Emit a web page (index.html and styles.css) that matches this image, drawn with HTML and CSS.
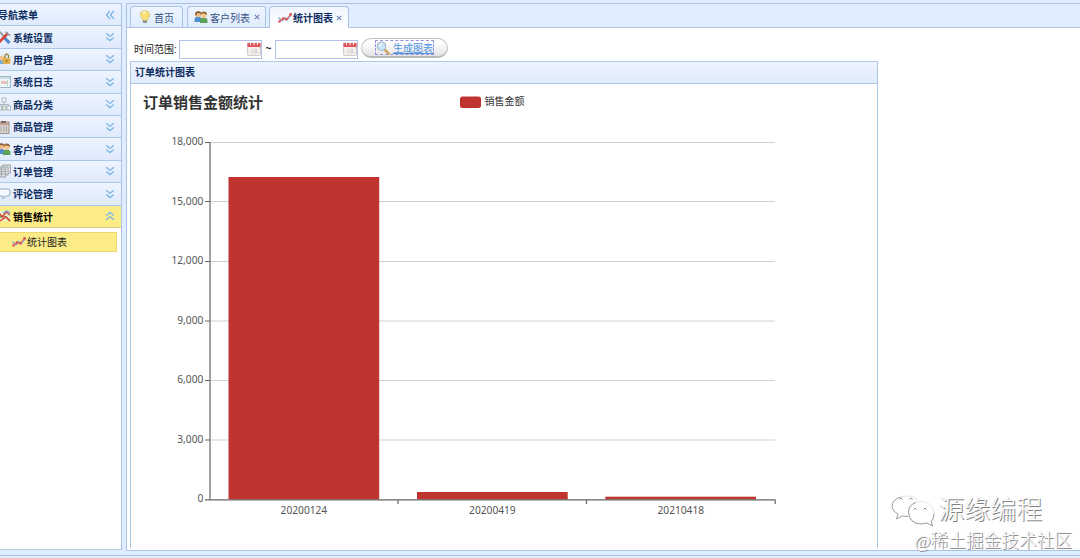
FILE: index.html
```html
<!DOCTYPE html>
<html lang="zh-CN">

<head>
    <meta charset="UTF-8">
    <meta name="viewport" content="width=device-width, initial-scale=1.0">
    <title>统计图表</title>
    <link rel="stylesheet" href="styles.css">
</head>

<body>
    <svg class="sprite" width="0" height="0">
        <symbol id="down" viewBox="0 0 10 10">
            <path d="M1.2 1.2L5 4.4 8.8 1.2M1.2 5.4L5 8.6 8.8 5.4" fill="none" stroke="#7db6e8" stroke-width="1.3"/>
        </symbol>
        <symbol id="trend" viewBox="0 0 14 14">
            <path d="M0.5 6.500L4 10 7 6.500 9 9 13.500 3.500" fill="none" stroke="#8ba6cc" stroke-width="1.3"/>
            <path d="M1 10.500L5 7.500 8 8.500 13 3" fill="none" stroke="#e46a63" stroke-width="1.1"/>
            <g fill="#e0534c"><circle cx="1.500" cy="10.500" r="1.200"/><circle cx="5" cy="7.500" r="1.300"/><circle cx="8.300" cy="8.300" r="1.300"/><circle cx="12.500" cy="3.300" r="1.400"/></g>
        </symbol>
        <symbol id="people" viewBox="0 0 14 14">
            <path d="M0.500 12V9Q1 6.500 4 6.500T7.500 9V12Z" fill="#4c8fd4"/>
            <circle cx="4.200" cy="4.500" r="2.800" fill="#efbd87"/>
            <path d="M1 4.500Q1 1.500 4.200 1.200T7.200 4Q5 2.500 3 3.500L2 6Z" fill="#8a5a2a"/>
            <path d="M6 13V10Q6.500 7.500 9.700 7.500T13.500 10V13Z" fill="#5ba357"/>
            <circle cx="9.700" cy="5" r="3" fill="#f5c792"/>
            <path d="M6.500 5Q6.500 1.500 9.800 1.500T13 5Q11 3 8.300 3.600Z" fill="#916336"/>
        </symbol>
        <symbol id="calendar" viewBox="0 0 14 14">
            <rect x="0.500" y="1" width="13" height="12.500" rx="1" fill="#f3eeee" stroke="#d5caca"/>
            <path d="M0.500 1H13.500V5H0.500Z" fill="#e65558"/>
            <path d="M3.500 0V3M7 0V3M10.500 0V3" stroke="#fff" stroke-width="1"/>
            <path d="M5.500 7.500V11M8 7.500H9.500V11H8Z" fill="none" stroke="#d0c5c6" stroke-width="0.800"/>
        </symbol>
    </svg>

    <div class="layout">
        <div class="sidebar">
            <div class="nav-header nav-title"><span>导航菜单</span>
                <svg class="arrow" viewBox="0 0 10 10"><path d="M4.800 1L1.500 5 4.800 9M8.800 1L5.500 5 8.800 9" fill="none" stroke="#7db6e8" stroke-width="1.3"/></svg>
            </div>
            <div class="nav-header">
                <svg class="icon" viewBox="0 0 14 14"><path d="M3 2L12 12" stroke="#9aa4ad" stroke-width="2"/><path d="M7.500 8L12.500 13" stroke="#4a86d0" stroke-width="3"/><path d="M11 3L2 12.500" stroke="#d94236" stroke-width="2.600"/><path d="M9 1.500L10.500 4.500 13.500 5" fill="none" stroke="#8c9299" stroke-width="1.500"/></svg>
                <span>系统设置</span><svg class="arrow"><use href="#down"/></svg>
            </div>
            <div class="nav-header">
                <svg class="icon" viewBox="0 0 14 14"><path d="M1 12V9L5 7.500 9 9V12Z" fill="#75aade"/><circle cx="5" cy="6" r="2.500" fill="#f0c087"/><path d="M8 6V3.500Q9.500 0.500 11.500 3.500V6" fill="none" stroke="#9a8446" stroke-width="1.400"/><rect x="5.500" y="6" width="8" height="6" rx="2" fill="#ddb04a"/><circle cx="9.500" cy="9" r="1" fill="#8d692c"/></svg>
                <span>用户管理</span><svg class="arrow"><use href="#down"/></svg>
            </div>
            <div class="nav-header">
                <svg class="icon" viewBox="0 0 14 14"><rect x="0.500" y="1.500" width="13" height="11" fill="#eef5fa" stroke="#9eb6c4"/><path d="M1 3H13" stroke="#a8c9d6"/><path d="M5 6V9M7 6V9M9 6V9" stroke="#e58e83"/><path d="M10.500 5V11" stroke="#b5dbc6"/></svg>
                <span>系统日志</span><svg class="arrow"><use href="#down"/></svg>
            </div>
            <div class="nav-header">
                <svg class="icon" viewBox="0 0 14 14"><g fill="#f3f6f8" stroke="#a1aab4" stroke-width="0.800"><path d="M7 4V8M3 9V7.500H11.500V9" fill="none"/><rect x="5" y="1" width="4" height="4"/><rect x="1" y="9" width="3.500" height="4"/><rect x="5.500" y="9" width="3.500" height="4" fill="#d9edcf"/><rect x="10" y="9" width="3.500" height="4"/></g></svg>
                <span>商品分类</span><svg class="arrow"><use href="#down"/></svg>
            </div>
            <div class="nav-header">
                <svg class="icon" viewBox="0 0 14 14"><rect x="1" y="2" width="11" height="11.500" fill="#d9d4d2" stroke="#9d8f89"/><path d="M4 1H9V3H4Z" fill="#806b60"/><path d="M1 4H12" stroke="#b4685b"/><path d="M4 6V12M7 6V12M9.500 6V12" stroke="#a8a3a2"/></svg>
                <span>商品管理</span><svg class="arrow"><use href="#down"/></svg>
            </div>
            <div class="nav-header">
                <svg class="icon"><use href="#people"/></svg>
                <span>客户管理</span><svg class="arrow"><use href="#down"/></svg>
            </div>
            <div class="nav-header">
                <svg class="icon" viewBox="0 0 14 14"><g fill="#dddfe2" stroke="#95989e" stroke-width="0.800"><rect x="5.500" y="1" width="8" height="8"/><rect x="3" y="3" width="8" height="8"/><rect x="0.500" y="5" width="8" height="8"/><path d="M0.500 7.500H8.500M0.500 10H8.500M4.500 5V13"/></g></svg>
                <span>订单管理</span><svg class="arrow"><use href="#down"/></svg>
            </div>
            <div class="nav-header">
                <svg class="icon" viewBox="0 0 14 14"><path d="M3 2H11Q13 2 13 4V7Q13 9 11 9H8.500L6 12V9H3Q1 9 1 7V4Q1 2 3 2Z" fill="#f7fbff" stroke="#90a7bf"/></svg>
                <span>评论管理</span><svg class="arrow"><use href="#down"/></svg>
            </div>
            <div class="nav-header selected">
                <svg class="icon" viewBox="0 0 14 14"><rect x="1" y="2" width="12" height="10" fill="#e9efcf"/><path d="M0.500 10L5 7 9 8 13 12" fill="none" stroke="#62a34a" stroke-width="1.600"/><path d="M1 3L5.500 8 9 3 13 6M3 12L9 8 13 12" fill="none" stroke="#dd463d" stroke-width="1.500"/><path d="M6 4L10 2 13 4" fill="none" stroke="#6b9bd5" stroke-width="1.300"/></svg>
                <span>销售统计</span><svg class="arrow up"><use href="#down"/></svg>
            </div>
            <div class="nav-item"><svg class="icon"><use href="#trend"/></svg><span>统计图表</span></div>
        </div>

        <div class="main">
            <div class="tabs">
                <div class="tab tab-home">
                    <svg class="icon" viewBox="0 0 14 14"><path d="M4.500 9Q2.500 7 2.500 4.800 2.500 1 7 0.700 11.500 1 11.500 4.800 11.500 7 9.500 9V10.500H4.500Z" fill="#f9df72" stroke="#d8bd62" stroke-width="0.800"/><path d="M5 3.500Q6 2 7.500 2" fill="none" stroke="#fff" stroke-width="1.300"/><path d="M5 10.500H9V13H5Z" fill="#8e949d"/></svg>
                    <span>首页</span>
                </div>
                <div class="tab tab-customer"><svg class="icon"><use href="#people"/></svg><span>客户列表</span><svg class="close" viewBox="0 0 6 6"><path d="M0.800 0.800L5.200 5.200M5.200 0.800L0.800 5.200"/></svg></div>
                <div class="tab tab-chart active"><svg class="icon"><use href="#trend"/></svg><span>统计图表</span><svg class="close" viewBox="0 0 6 6"><path d="M0.800 0.800L5.200 5.200M5.200 0.800L0.800 5.200"/></svg></div>
            </div>

            <div class="content">
                <div class="toolbar">
                    <label>时间范围:</label>
                    <div class="datebox"><svg><use href="#calendar"/></svg></div>
                    <span class="tilde">~</span>
                    <div class="datebox"><svg><use href="#calendar"/></svg></div>
                    <a class="btn"><span class="btn-inner">
                        <svg class="icon" viewBox="0 0 14 14"><path d="M8 8L12.500 12.500" stroke="#d3a765" stroke-width="2.600" stroke-linecap="round"/><circle cx="5.500" cy="5.200" r="4.200" fill="#cae6fa" stroke="#a7bccd" stroke-width="1.200"/><path d="M3.500 5Q3.500 3 5.500 2.800" fill="none" stroke="#fff"/></svg>
                        <span class="btn-text">生成图表</span></span></a>
                </div>

                <div class="panel">
                    <div class="panel-header">订单统计图表</div>
                    <svg class="chart" width="746" height="464" viewBox="131 84 746 464">
                        <text x="143" y="107.500" class="chart-title">订单销售金额统计</text>
                        <rect x="460" y="96.500" width="21" height="11.500" rx="2.500" class="bar"/>
                        <text x="484.500" y="105.300" class="legend">销售金额</text>

                        <path class="grid" d="M210 142.500H775M210 201.500H775M210 261.500H775M210 321H775M210 380.500H775M210 440H775"/>
                        <rect class="bar" x="228.500" y="177" width="150.700" height="322.500"/>
                        <rect class="bar" x="417" y="492" width="150.700" height="7.500"/>
                        <rect class="bar" x="605.300" y="496.700" width="150.700" height="2.800"/>
                        <path class="axis" d="M210 142V500M205 142.500H210M205 201.500H210M205 261.500H210M205 321H210M205 380.500H210M205 440H210M205 499.800H775.500M398 500V504M586.500 500V504M775.200 500V504"/>

                        <g class="label y-label">
                            <text x="203.300" y="145.300">18,000</text>
                            <text x="203.300" y="204.800">15,000</text>
                            <text x="203.300" y="264.300">12,000</text>
                            <text x="203.300" y="323.800">9,000</text>
                            <text x="203.300" y="383.300">6,000</text>
                            <text x="203.300" y="442.800">3,000</text>
                            <text x="203.300" y="502.300">0</text>
                        </g>
                        <g class="label x-label">
                            <text x="303.900" y="514.300">20200124</text>
                            <text x="492.400" y="514.300">20200419</text>
                            <text x="680.800" y="514.300">20210418</text>
                        </g>
                    </svg>
                </div>
            </div>
        </div>
    </div>
    <div class="footer"></div>

    <div class="watermark">
        <div class="brand">
            <svg width="46" height="34" viewBox="0 0 46 34">
                <path d="M11 3Q2 5 2 13 3 18 8 20L6.500 25 12 22 18 22.500" fill="none" stroke="#a0a0a0"/>
                <path d="M11 3Q20 0 28 6" fill="none" stroke="#e4e4e4"/>
                <path d="M31 7.500Q18.500 8 18.500 18.500 19.500 29.500 31 30L37 29 42.500 32 41.200 27.500Q44 24 44 18 42 8 31 7.500Z" fill="#fff" stroke="#e4e4e4"/>
                <path d="M26 8.500Q18.500 11 18.500 18.500 19.500 29.500 31 30L37 29 42.500 32 41.200 27.500Q44 25 44 20" fill="none" stroke="#a0a0a0"/>
                <path d="M9.500 5.500Q11 2.500 12.500 5.500M19.500 5.500Q21 2.500 22.500 5.500M23.500 15.500Q25 12.500 26.500 15.500M33.500 15.500Q35 12.500 36.500 15.500" fill="none" stroke="#8d8d8d"/>
            </svg>
            <span>源缘编程</span>
        </div>
        <div class="community">@稀土掘金技术社区</div>
    </div>
</body>

</html>
```
FILE: styles.css
```css
* {
    box-sizing: border-box;
}

body {
    font-family: "Liberation Sans", "Noto Sans CJK SC", sans-serif;
    font-size: 10px;
    color: #222;
    background-color: #e0ecff;
    margin: 0;
    height: 558px;
    overflow: hidden;
}

svg {
    display: block;
    flex-shrink: 0;
}

.sprite {
    position: absolute;
}

.layout {
    display: flex;
    gap: 4px;
    height: 551px;
    padding-top: 3px;
}

.sidebar {
    width: 122px;
    height: 547px;
    background-color: #fff;
    border: 1px solid #a9c4e4;
    border-left: none;
    border-bottom-color: #b5cae0;
}

.nav-header {
    display: flex;
    align-items: center;
    height: 22.4px;
    padding-right: 6px;
    color: #0e2d5f;
    font-weight: bold;
    background: linear-gradient(#edf4ff, #dfeafc);
    border-bottom: 1px solid #a9c7e8;
}

.nav-header span {
    flex: 1;
}

.nav-title span {
    margin-left: -2px;
}

.icon {
    width: 14px;
    height: 14px;
}

.nav-header .icon {
    margin-left: -3px;
    margin-right: 2px;
}

.arrow {
    width: 10px;
    height: 10px;
}

.arrow.up {
    transform: rotate(180deg);
}

.nav-header.selected {
    color: #000;
    background: #fbec88;
    border-bottom-color: #d9cb81;
}

.nav-item {
    display: flex;
    align-items: center;
    height: 20px;
    margin: 4px 4px 0 0;
    padding-left: 12px;
    color: #222;
    background-color: #fbec88;
    border: 1px solid #efd86f;
    border-left: none;
}

.nav-item span {
    margin-left: 1px;
}

.main {
    flex: 1;
    background-color: #fff;
    border: 1px solid #a9c4e4;
    border-right: none;
}

.tabs {
    display: flex;
    align-items: flex-end;
    height: 24px;
    padding-left: 3px;
    border-bottom: 1px solid #a9c4e4;
    background-color: #e0ecff;
}

.tab {
    display: flex;
    align-items: center;
    height: 21px;
    margin-right: 4px;
    color: #36537f;
    background: linear-gradient(#eff5ff, #dfebff);
    border: 1px solid #a9c4e4;
    border-bottom: none;
    border-radius: 4px 4px 0 0;
}

.tab-home {
    width: 53px;
    padding-left: 7px;
}

.tab-home span {
    margin-left: 2px;
}

.tab-customer {
    width: 79px;
    margin-right: 3px;
    padding-left: 6px;
}

.tab-customer span {
    margin-left: 2px;
}

.tab-customer .close {
    margin-left: 4px;
}

.tab-chart {
    width: 80px;
    padding-left: 8px;
}

.tab-chart span {
    margin-left: 1px;
}

.tab.active {
    height: 22px;
    margin-bottom: -1px;
    color: #0e2d5f;
    font-weight: bold;
    background: linear-gradient(#eff5ff, #fff);
}

.close {
    width: 6px;
    height: 6px;
    margin-left: 3px;
    fill: none;
    stroke: #7189b5;
    stroke-width: 1.2;
}

.content {
    padding: 10px 0 0 3px;
}

.toolbar {
    display: flex;
    align-items: center;
    height: 23px;
    padding-left: 4px;
    padding-bottom: 2px;
}

.toolbar label {
    width: 45px;
}

.datebox {
    display: flex;
    justify-content: flex-end;
    align-items: center;
    width: 83px;
    height: 19px;
    margin-top: 2px;
    border: 1px solid #b3c1ea;
}

.datebox svg {
    width: 14px;
    height: 14px;
    margin-bottom: 2px;
}

.tilde {
    width: 13px;
    font-weight: bold;
    text-align: center;
}

.btn {
    display: flex;
    justify-content: center;
    align-items: center;
    width: 87px;
    height: 20px;
    margin-left: 3px;
    margin-bottom: 1px;
    color: #5294df;
    background: linear-gradient(#fff 20%, #e4e4e4);
    border: 1px solid #c2c2c2;
    border-bottom: 2px solid #b9b9b9;
    border-radius: 10px;
}

.btn-inner {
    display: flex;
    align-items: center;
    height: 15px;
    border: 1px dashed #9390dc;
}

.btn-text {
    margin-left: 3px;
    text-decoration: underline;
}

.panel {
    width: 748px;
    height: 487px;
    border: 1px solid #a9c9e4;
    border-bottom: none;
}

.panel-header {
    height: 22px;
    padding-left: 4px;
    line-height: 21px;
    color: #0e2d5f;
    font-weight: bold;
    background: linear-gradient(#eff5ff, #dfeafc);
    border-bottom: 1px solid #a9c9e4;
}

.chart-title {
    font-size: 15px;
    font-weight: bold;
    fill: #333;
}

.legend {
    fill: #333;
}

.bar {
    fill: #c03430;
}

.grid {
    fill: none;
    stroke: #d1d1d1;
}

.axis {
    fill: none;
    stroke: #666;
    stroke-width: 1.2;
}

.label {
    font-family: "Noto Sans", sans-serif;
    font-size: 10.2px;
    fill: #555;
}

.y-label {
    text-anchor: end;
}

.x-label {
    text-anchor: middle;
}

.footer {
    height: 5px;
    border-bottom: 1px solid #a9c4e4;
}

/* sits over the page in the bottom right corner */
.watermark {
    position: absolute;
    right: 8px;
    bottom: 4px;
    color: #fff;
    font-weight: 300;
    text-shadow: 1px 1px 0 #808080, 0 0 1px #d0d0d0;
}

.brand {
    display: flex;
    align-items: center;
    height: 39px;
    margin-left: -24px;
    font-size: 26px;
}

.brand span {
    margin-left: 2px;
    margin-top: -6px;
}

.community {
    height: 24px;
    font-family: "Liberation Serif", "Noto Sans CJK SC", serif;
    font-size: 17.7px;
    line-height: 23px;
}
```
